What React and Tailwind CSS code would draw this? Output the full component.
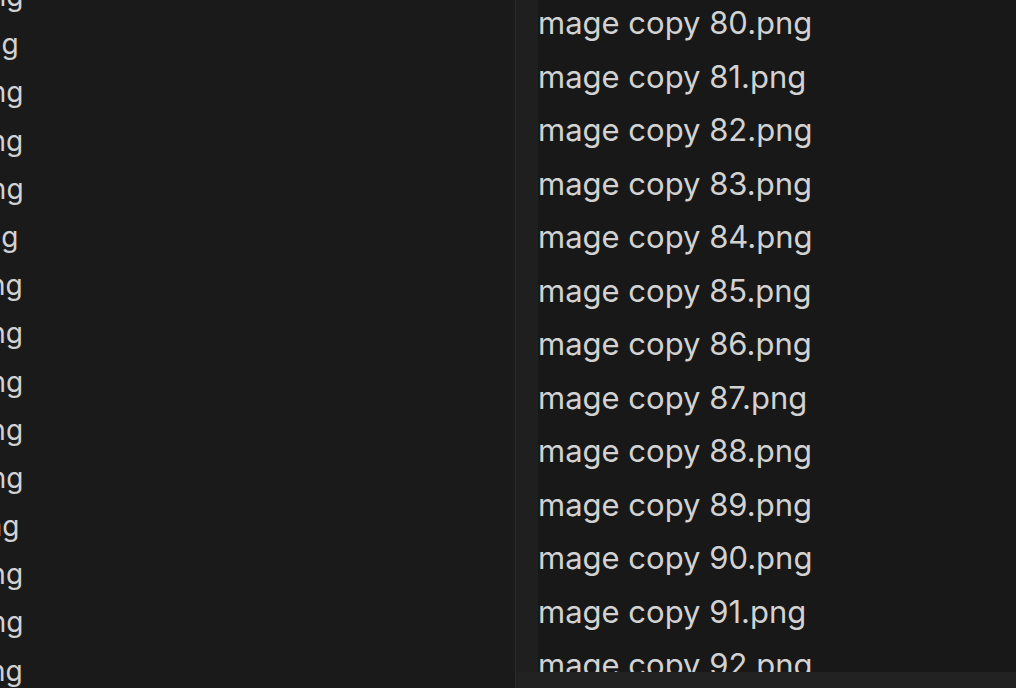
import React from 'react';

const leftFiles = ['60', '67', '62', '63', '64', '57', '65', '66', '68', '69', '82', '47', '83', '84', '85'];
const rightFiles = ['80', '81', '82', '83', '84', '85', '86', '87', '88', '89', '90', '91', '92'];

export default function App() {
  return (
    <div
      className="flex h-[688px] w-[1016px] overflow-hidden bg-[#1a1a1a] text-[#d2d2d2]"
      style={{ fontFamily: 'Inter, "Noto Sans", sans-serif' }}
    >
      {/* left pane, scrolled far right so only the tails of names show */}
      <div className="relative h-full w-[515px] shrink-0 overflow-hidden">
        <div className="-mt-[28px] ml-[-232px] flex flex-col items-start">
          {leftFiles.map((n, i) => (
            <div key={i} className="h-[48.2px] whitespace-nowrap text-[28px] leading-[48.2px]">
              Image copy {n}.png
            </div>
          ))}
        </div>
      </div>

      <div className="h-full w-px shrink-0 bg-[#2a2a2a]" />

      {/* right pane */}
      <div className="flex h-full flex-1 flex-col">
        <div className="flex min-h-0 flex-1">
          <div className="h-full w-[22px] shrink-0 bg-[#1f1f1f]" />
          <div className="h-full flex-1 overflow-hidden bg-[#181818]">
            <div className="-mt-[4px] flex flex-col">
              {rightFiles.map((n) => (
                <div key={n} className="h-[53.5px] whitespace-nowrap text-[31px] leading-[53.5px]">
                  mage copy {n}.png
                </div>
              ))}
            </div>
          </div>
        </div>
        <div className="h-[16px] shrink-0 bg-[#222222]" />
      </div>
    </div>
  );
}
